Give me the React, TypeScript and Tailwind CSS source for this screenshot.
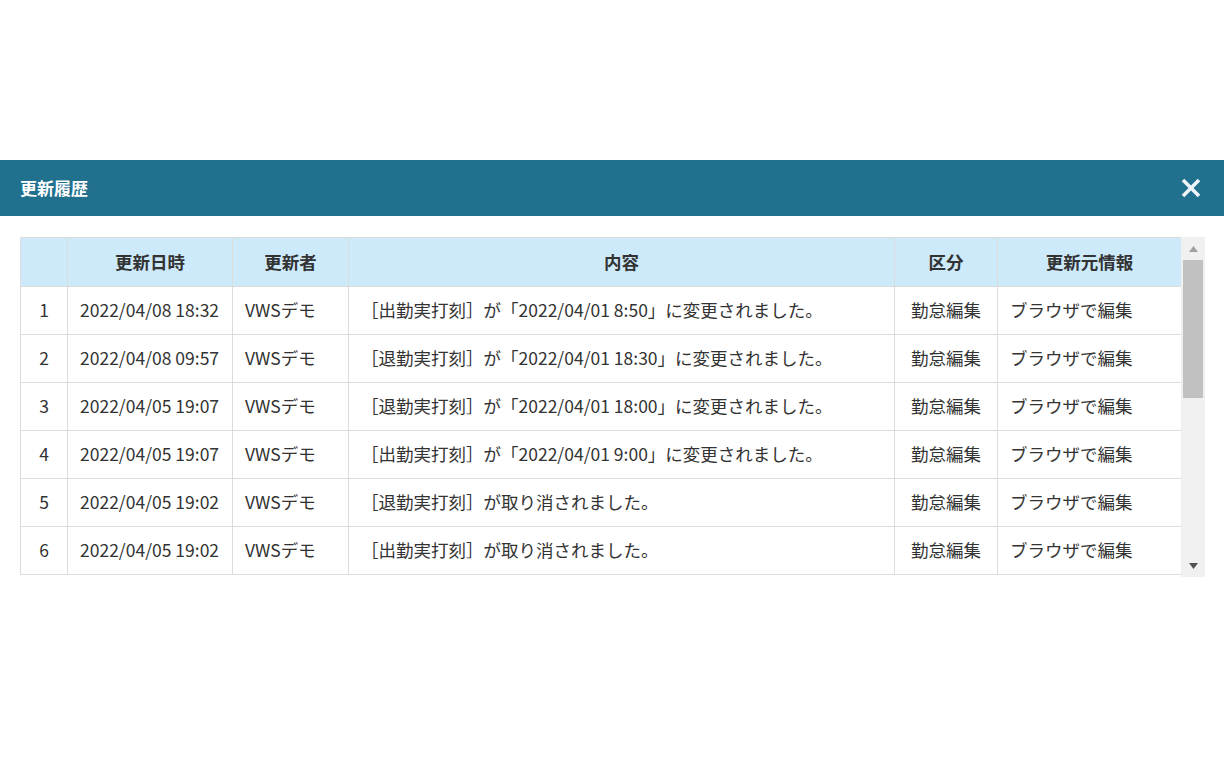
import React from "react";

const rows = [
  ["1", "2022/04/08 18:32", "［出勤実打刻］が「2022/04/01 8:50」に変更されました。"],
  ["2", "2022/04/08 09:57", "［退勤実打刻］が「2022/04/01 18:30」に変更されました。"],
  ["3", "2022/04/05 19:07", "［退勤実打刻］が「2022/04/01 18:00」に変更されました。"],
  ["4", "2022/04/05 19:07", "［出勤実打刻］が「2022/04/01 9:00」に変更されました。"],
  ["5", "2022/04/05 19:02", "［退勤実打刻］が取り消されました。"],
  ["6", "2022/04/05 19:02", "［出勤実打刻］が取り消されました。"],
];

const font = { fontFamily: '"Noto Sans CJK JP", "Noto Sans", sans-serif' };

export default function App() {
  return (
    <div className="w-[1224px] h-[758px] bg-white text-[#333]" style={font}>
      <div className="h-[160px]" />
      <div className="h-[56px] bg-[#20708e] flex items-center justify-between pl-[20px] pr-[22px]">
        <span className="text-white font-bold text-[17px]">更新履歴</span>
        <svg width="22" height="22" viewBox="0 0 22 22">
          <path d="M3 3 L19 19 M19 3 L3 19" stroke="#eef4f7" strokeWidth="3.6" strokeLinecap="butt" />
        </svg>
      </div>
      <div className="pt-[21px] pl-[20px] flex">
        <div className="w-[1161px] h-[340px] overflow-hidden">
          <table className="border-collapse text-[17.5px] w-[1161px] table-fixed">
            <colgroup>
              <col className="w-[47px]" />
              <col className="w-[165px]" />
              <col className="w-[116px]" />
              <col className="w-[546px]" />
              <col className="w-[103px]" />
              <col className="w-[184px]" />
            </colgroup>
            <thead>
              <tr className="h-[49px] bg-[#cdeafb]">
                {["", "更新日時", "更新者", "内容", "区分", "更新元情報"].map((h, i) => (
                  <th key={i} className="border border-[#dcdcdc] text-center font-bold">{h}</th>
                ))}
              </tr>
            </thead>
            <tbody>
              {rows.map((r) => (
                <tr key={r[0]} className="h-[48px]">
                  <td className="border border-[#dcdcdc] text-center">{r[0]}</td>
                  <td className="border border-[#dcdcdc] px-3 whitespace-nowrap">{r[1]}</td>
                  <td className="border border-[#dcdcdc] px-3">VWSデモ</td>
                  <td className="border border-[#dcdcdc] px-[12px] whitespace-nowrap">{r[2]}</td>
                  <td className="border border-[#dcdcdc] text-center whitespace-nowrap">勤怠編集</td>
                  <td className="border border-[#dcdcdc] px-3 whitespace-nowrap">ブラウザで編集</td>
                </tr>
              ))}
            </tbody>
          </table>
        </div>
        <div className="w-[24px] h-[340px] bg-[#f0f0f0] flex flex-col items-center">
          <div className="h-[23px] flex items-center justify-center">
            <svg width="9" height="6" viewBox="0 0 9 6"><path d="M0 6 L4.5 0 L9 6 Z" fill="#a0a0a0" /></svg>
          </div>
          <div className="w-[20px] h-[138px] bg-[#c1c1c1]" />
          <div className="flex-1" />
          <div className="h-[23px] flex items-center justify-center">
            <svg width="9" height="6" viewBox="0 0 9 6"><path d="M0 0 L9 0 L4.5 6 Z" fill="#505050" /></svg>
          </div>
        </div>
      </div>
    </div>
  );
}
